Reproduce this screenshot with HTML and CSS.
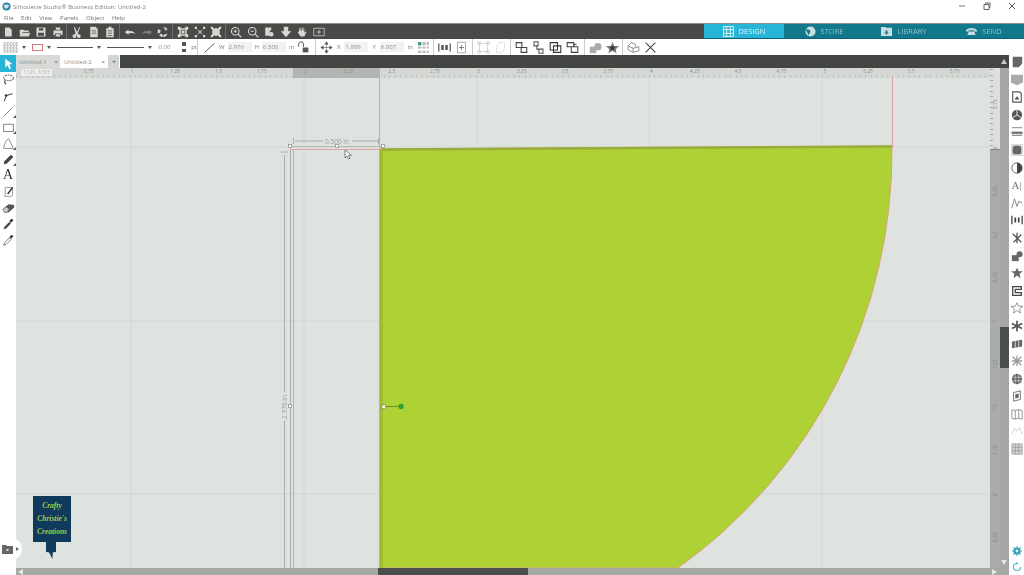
FILE: index.html
```html
<!DOCTYPE html>
<html lang="en">

<head>
    <meta charset="UTF-8">
    <title>Silhouette Studio</title>
    <link rel="stylesheet" href="styles.css">
</head>

<body>
    <div class="titlebar">
        <svg class="app-logo" viewBox="0 0 10 10"><circle cx="5" cy="5" r="4.5" fill="#2b86a8"/><path d="M2 4c2-2 4-1 6 0-1 3-3 4-5 3z" fill="#cfe6ee"/></svg>
        <span class="app-title">Silhouette Studio® Business Edition: Untitled-2</span>
        <div class="win-btns">
            <svg viewBox="0 0 8 8"><path d="M1 4h6" stroke="#777" fill="none"/></svg>
            <svg viewBox="0 0 8 8"><path d="M1 2.500h5v5H1zM2.500 2.500V1H7v4.500H6" stroke="#666" fill="none"/></svg>
            <svg viewBox="0 0 8 8"><path d="M1 1l6 6M7 1L1 7" stroke="#555" fill="none"/></svg>
        </div>
    </div>

    <div class="menubar">
        <span>File</span><span>Edit</span><span>View</span><span>Panels</span><span>Object</span><span>Help</span>
    </div>

    <div class="topbar">
        <div class="dark-tools">
            <div class="dark-group first">
                <svg viewBox="0 0 16 16"><path d="M4 2h6l3 3v9H4z"/></svg>
                <svg viewBox="0 0 16 16"><path d="M1 5h5l1 1h6v2H5l-2 6H1zM5 9h10l-2 5H3z"/></svg>
                <svg viewBox="0 0 16 16"><path d="M2 2h12v12H2zM5 3v3h6V3zM4 9v4h8V9z" fill-rule="evenodd"/></svg>
                <svg viewBox="0 0 16 16"><path d="M5 2h6v3H5zM2 6h12v6h-2v-2H4v2H2zM5 11h6v3H5z"/></svg>
            </div>
            <div class="dark-group">
                <svg viewBox="0 0 16 16"><path d="M5 1l3 7 3-7 1 1-3 8 1 1a2.500 2.500 0 1 1-2 2L8 11l-1 2a2.500 2.500 0 1 1-2-2l1-1-2-8z"/></svg>
                <svg viewBox="0 0 16 16"><path d="M3 1h7l3 3v11H3zM5 6v1h6V6zM5 9v1h6V9z" fill-rule="evenodd"/></svg>
                <svg viewBox="0 0 16 16"><path d="M3 3h3V1h4v2h3v12H3zM5 6v1h6V6zM5 9v1h6V9zM5 12v1h6v-1z" fill-rule="evenodd"/></svg>
            </div>
            <div class="dark-group">
                <svg viewBox="0 0 16 16"><path d="M1 8l5-3v2c4-1 7 0 9 4-3-2-5-2-9-1v2z"/></svg>
                <svg class="dim" viewBox="0 0 16 16"><path d="M15 8l-5-3v2C6 6 3 7 1 11c3-2 5-2 9-1v2z"/></svg>
                <svg viewBox="0 0 16 16"><path d="M8 1a7 7 0 0 1 6 4l-3 1-1-3zM14 10a7 7 0 0 1-5 5l-1-3 3-1zM2 4l3 2-1 3-3 1a7 7 0 0 1 1-6zM3 12l3-2 2 3-1 2a7 7 0 0 1-4-3z"/></svg>
            </div>
            <div class="dark-group">
                <svg viewBox="0 0 16 16"><path d="M1 1h4v2h6V1h4v4h-2v6h2v4h-4v-2H5v2H1v-4h2V5H1zM5 5v6h6V5z" fill-rule="evenodd"/><path d="M6 6h4v4H6z"/></svg>
                <svg viewBox="0 0 16 16"><path d="M1 1h3v3H1zM12 1h3v3h-3zM1 12h3v3H1zM12 12h3v3h-3z"/><path d="M5 5l6 6M11 5l-6 6" stroke="#d6d8d4" stroke-width="1.300"/></svg>
                <svg viewBox="0 0 16 16"><path d="M1 1h3v2h8V1h3v3h-2v8h2v3h-3v-2H4v2H1v-3h2V4H1z"/></svg>
            </div>
            <div class="dark-group last">
                <svg viewBox="0 0 16 16"><circle cx="7" cy="7" r="5" fill="none" stroke="#d6d8d4" stroke-width="1.500"/><path d="M10.500 10.500L15 15M5 7h4M7 5v4" stroke="#d6d8d4" stroke-width="1.500"/></svg>
                <svg viewBox="0 0 16 16"><circle cx="7" cy="7" r="5" fill="none" stroke="#d6d8d4" stroke-width="1.500"/><path d="M10.500 10.500L15 15M5 7h4" stroke="#d6d8d4" stroke-width="1.500"/></svg>
                <svg viewBox="0 0 16 16"><path d="M3 2h8v4H9v7H3z"/><circle cx="11" cy="11" r="3"/></svg>
                <svg viewBox="0 0 16 16"><path d="M5 1h6v6h4l-7 8-7-8h4z"/></svg>
                <svg viewBox="0 0 16 16"><path d="M4 6V3h1v3h1V2h1v4h1V2h1v4h1V3h1v6l2-2 1 1-3 6H6L2 8l1-1 1 1z"/></svg>
                <svg viewBox="0 0 16 16"><path d="M1 3h14v10H1zM8 5v6M5 8h6" fill="none" stroke="#d6d8d4"/></svg>
            </div>
        </div>
        <div class="nav">
            <div class="nav-item active">
                <svg viewBox="0 0 12 12"><path d="M.5.500h11v11H.500zM4 .500v11M8 .500v11M.500 4h11M.500 8h11" fill="none" stroke="#e6f6fb"/></svg>
                <span>DESIGN</span>
            </div>
            <div class="nav-item">
                <svg viewBox="0 0 12 12"><circle cx="6" cy="6" r="5.500" fill="#c9dde2"/><path d="M1 4c2-1 4 0 5 2l-2 4z" fill="#12788c"/></svg>
                <span>STORE</span>
            </div>
            <div class="nav-item">
                <svg viewBox="0 0 12 12"><path d="M0 1h5l1 1h6v9H0z" fill="#c9dde2"/><path d="M5 5h2v2h1.500L6 9.500 3.500 7H5z" fill="#12788c"/></svg>
                <span>LIBRARY</span>
            </div>
            <div class="nav-item">
                <svg viewBox="0 0 16 12"><path d="M0 4c4-4 12-4 16 0v2h-4V4H4v2H0zM4 6h8l2 5H2z" fill="#c9dde2"/></svg>
                <span>SEND</span>
            </div>
        </div>
    </div>

    <div class="optionsbar">
        <div class="opt-group fill-group">
            <span class="swatch"></span>
            <span class="caret"></span>
            <span class="stroke-box"></span>
            <span class="caret"></span>
            <span class="line-pick"></span>
            <span class="caret"></span>
            <span class="line-pick"></span>
            <span class="caret"></span>
            <span class="field w-num">0.00</span>
            <span class="spin"></span>
            <span class="unit">pt</span>
        </div>
        <div class="opt-group size-group">
            <svg class="opt-icon" viewBox="0 0 16 16"><path d="M2 14L14 3" stroke="#555" stroke-width="1.200"/></svg>
            <span class="unit">W</span><span class="field">2.976</span>
            <span class="unit">H</span><span class="field">0.500</span>
            <span class="unit">in</span>
            <svg class="opt-icon" viewBox="0 0 16 16"><path d="M2 7V4a3 3 0 0 1 6 0v3" fill="none" stroke="#555" stroke-width="1.200"/><path d="M7 8h7v6H7z" fill="#555"/></svg>
        </div>
        <div class="opt-group pos-group">
            <svg class="opt-icon" viewBox="0 0 16 16"><path d="M8 1v14M1 8h14M8 1L6 4h4zM8 15l-2-3h4zM1 8l3-2v4zM15 8l-3-2v4z" fill="#555" stroke="#555" stroke-width=".7"/></svg>
            <span class="unit">X</span><span class="field">1.959</span>
            <span class="unit">Y</span><span class="field">6.007</span>
            <span class="unit">in</span>
            <svg class="opt-icon" viewBox="0 0 12 12"><path d="M1 1h3v3H1z" fill="#2a9d80"/><path d="M5 1h3v3H5zM9 1h2v3H9zM1 5h3v2H1zM5 5h3v2H5zM9 5h2v2H9zM1 9h3v2H1zM5 9h3v2H5zM9 9h2v2H9z" fill="#b9bcb9"/></svg>
        </div>
        <div class="opt-group w39">
            <svg class="opt-icon" viewBox="0 0 16 16"><path d="M1 3v10M15 3v10" stroke="#555" stroke-width="1.500"/><path d="M4 5h3v6H4zM9 5h3v6H9z" fill="#555"/></svg>
            <svg class="opt-icon" viewBox="0 0 16 16"><path d="M3 1.500h10v13H3z" fill="none" stroke="#999"/><path d="M8 5v6M5 8h6" stroke="#666"/></svg>
        </div>
        <div class="opt-group w38">
            <svg class="opt-icon" viewBox="0 0 16 16"><path d="M3 3h10v10H3zM1 1h3v3H1zM12 1h3v3h-3zM1 12h3v3H1zM12 12h3v3h-3z" fill="none" stroke="#c8cac8"/></svg>
            <svg class="opt-icon" viewBox="0 0 16 16"><path d="M6 2h7v7l-3 5H3V7z" fill="none" stroke="#c8cac8" stroke-dasharray="2 1"/></svg>
        </div>
        <div class="opt-group w74">
            <svg class="opt-icon" viewBox="0 0 16 16"><path d="M1.500 2h7v6h-7zM7.500 8h7v6h-7z" fill="none" stroke="#444" stroke-width="1.300"/></svg>
            <svg class="opt-icon" viewBox="0 0 16 16"><path d="M2.500 1h5v5h-5zM8.500 10h5v5h-5zM6 6v4h3" fill="none" stroke="#555" stroke-width="1.300"/></svg>
            <svg class="opt-icon" viewBox="0 0 16 16"><path d="M1.500 2h9v9h-9zM5.500 6h9v8h-9z" fill="none" stroke="#333" stroke-width="1.300"/></svg>
            <svg class="opt-icon" viewBox="0 0 16 16"><path d="M1.500 2h8v5h-8zM6.500 7h8v7h-8zM10 7V4h3" fill="none" stroke="#444" stroke-width="1.300"/></svg>
        </div>
        <div class="opt-group w38">
            <svg class="opt-icon" viewBox="0 0 16 16"><path d="M1 7h8v8H1z" fill="#a9acaa"/><circle cx="11" cy="7" r="4.500" fill="#a9acaa"/></svg>
            <svg class="opt-icon" viewBox="0 0 16 16"><path d="M8 1l2 5h6l-4 4 1 5-5-3-5 3 1-5-4-4h6z" fill="#7b7e7c"/><path d="M8 5l1 2h3l-2 2 .5 3L8 10.500 5.500 12 6 9 4 7h3z" fill="#333"/></svg>
        </div>
        <div class="opt-group last">
            <svg class="opt-icon" viewBox="0 0 16 16"><path d="M1.500 6l4-4 5 2v3M1.500 6v5l6 3v-5zM7.500 9l7-2v5l-7 2" fill="none" stroke="#777"/></svg>
            <svg class="opt-icon" viewBox="0 0 16 16"><path d="M2 2l12 12M14 2L2 14" stroke="#444" stroke-width="1.300"/></svg>
        </div>
    </div>

    <div class="main">
        <div class="left-tools">
            <div class="tool active"><svg viewBox="0 0 16 16"><path d="M4 2l9 7H9l2 5-2 1-2-5-3 3z" fill="#fff"/></svg></div>
            <div class="tool"><svg viewBox="0 0 16 16"><ellipse cx="8" cy="6" rx="6" ry="3.500" fill="none" stroke="#666" stroke-width="1.300" stroke-dasharray="2.500 1"/><path d="M4 9c-2 2 0 4 1 5" fill="none" stroke="#444" stroke-width="1.300"/></svg></div>
            <div class="tool"><svg viewBox="0 0 16 16"><path d="M3 15c1-6 3-8 10-9" fill="none" stroke="#333" stroke-width="1.200"/><circle cx="5" cy="8" r="1.500" fill="#333"/></svg></div>
            <div class="tool corner"><svg viewBox="0 0 16 16"><path d="M2 14L13 3" stroke="#666"/></svg></div>
            <div class="tool corner"><svg viewBox="0 0 16 16"><path d="M2 4h12v9H2z" fill="none" stroke="#666"/></svg></div>
            <div class="tool corner"><svg viewBox="0 0 16 16"><path d="M2 14C3 8 5 4 8 2l6 12z" fill="none" stroke="#777"/></svg></div>
            <div class="tool corner"><svg viewBox="0 0 16 16"><path d="M2 14l1-4 8-8 3 3-8 8z" fill="#444"/></svg></div>
            <div class="tool letter">A</div>
            <div class="tool"><svg viewBox="0 0 16 16"><path d="M4 3h9v8c0 2-1 3-3 3H3c1-1 1-2 1-3z" fill="none" stroke="#888"/><path d="M7 11l6-8" stroke="#333" stroke-width="1.800"/></svg></div>
            <div class="tool"><svg viewBox="0 0 16 16"><path d="M1 10l7-6 7 1v3l-7 6H3z" fill="#555"/><path d="M1 10l4-3 4 3-3 4H3z" fill="#ccc" stroke="#444" stroke-width=".6"/></svg></div>
            <div class="tool"><svg viewBox="0 0 16 16"><path d="M2 15l1-3 6-6 2 2-6 6z" fill="#444"/><path d="M9 5l3-3 2 2-3 3z" fill="#222"/></svg></div>
            <div class="tool"><svg viewBox="0 0 16 16"><path d="M2 15l1-3 6-6 2 2-6 6z" fill="none" stroke="#666"/><path d="M9 5l3-3 2 2-3 3z" fill="#333"/></svg></div>
        </div>

        <div class="work">
            <div class="tabs">
                <div class="tab">Untitled-1<b>×</b></div>
                <div class="tab current">Untitled-2<b>×</b></div>
                <div class="tab plus">+</div>
                <div class="tabs-fill"></div>
                <span class="scroll-up"></span>
            </div>
            <div class="stage">
                <div class="canvas-col">
                    <div class="hruler">
                        <span class="coords">1.125 , 6.505</span>
                        <span>0.75</span><span>1</span><span>1.25</span><span>1.5</span><span>1.75</span><span>2</span><span>2.25</span><span>2.5</span><span>2.75</span><span>3</span><span>3.25</span><span>3.5</span><span>3.75</span><span>4</span><span>4.25</span><span>4.5</span><span>4.75</span><span>5</span><span>5.25</span><span>5.5</span><span>5.75</span>
                    </div>
                    <div class="canvas">
                        <svg class="drawing" viewBox="16 78 974 490">
                            <path d="M131 78v490M304 78v490M477 78v490M649 78v490M822 78v490M16 147h974M16 321h974M16 494h974" stroke="#d3d7d4" stroke-width="1" fill="none"/>
                            <path d="M379.500 78v492M892.500 78v70M293.500 149v419" stroke="#e3a0a6" stroke-width="1.100" fill="none"/>
                            <path d="M380 149L892 146A512 512 0 0 1 678 568H380z" fill="#aed136" stroke="#dd9f7c"/>
                            <path d="M381 149.500L892 146.500" stroke="#99ad3a" stroke-width="2.500"/>
                            <path d="M381.500 150v418" stroke="#9bbd30" stroke-width="3"/>
                            <path d="M290 149.500h90" stroke="#e3a0a6" stroke-width="1.200"/>
                            <path d="M295 141h28M352 141h27M293.500 138v6M378.500 138v6" stroke="#a9adaa" fill="none"/>
                            <path d="M292 146.500h91" stroke="#b3b7b4" fill="none"/>
                            <text class="dim-label" x="337" y="143.500" text-anchor="middle">0.500 in</text>
                            <path d="M284.500 155v237M284.500 421v147M290.500 149v419M281 152h7" stroke="#a9adaa" fill="none"/>
                            <text class="dim-label" transform="translate(286.500 407) rotate(-90)" text-anchor="middle">2.976 in</text>
                            <rect x="288.500" y="144.500" width="3" height="3" fill="#fff" stroke="#888" stroke-width=".7"/>
                            <rect x="335.500" y="144.500" width="3" height="3" fill="#fff" stroke="#888" stroke-width=".7"/>
                            <rect x="381.500" y="144.500" width="3" height="3" fill="#fff" stroke="#888" stroke-width=".7"/>
                            <rect x="288.500" y="404.500" width="3" height="3" fill="#fff" stroke="#888" stroke-width=".7"/>
                            <path d="M386 406.500h12" stroke="#6c8f2e"/>
                            <rect x="382" y="405" width="3.500" height="3.500" fill="#fff" stroke="#777" stroke-width=".6"/>
                            <circle cx="401" cy="406.500" r="2.300" fill="#27a83a" stroke="#1c7d2a" stroke-width=".6"/>
                            <path d="M345 150v8l2-2 1.500 3 1.500-.7-1.500-3h3z" fill="#fff" stroke="#555" stroke-width=".7"/>
                        </svg>
                        <div class="logo-card">
                            <span>Crafty</span><span>Christie's</span><span>Creations</span>
                        </div>
                        <div class="logo-tail"></div>
                    </div>
                </div>
                <div class="vruler">
                    <span>5.75</span><span>6</span><span>6.25</span><span>6.5</span><span>6.75</span><span>7</span><span>7.25</span><span>7.5</span><span>7.75</span><span>8</span><span>8.25</span>
                </div>
                <div class="vscroll">
                    <div class="vthumb"></div>
                    <span class="scroll-down"></span>
                </div>
            </div>
            <div class="hscroll">
                <span class="scroll-left"></span>
                <div class="hthumb"></div>
                <span class="scroll-right"></span>
            </div>
        </div>

        <div class="right-tools">
            <svg viewBox="0 0 14 14"><path d="M2 1h11v8l-4 4H2z" fill="#666"/></svg>
            <svg viewBox="0 0 14 14"><path d="M0 1h14v9l-7 3-7-3z" fill="#a9acaa"/></svg>
            <svg viewBox="0 0 14 14"><path d="M2 1h8l2 2v10H2z" fill="none" stroke="#555" stroke-width="1.300"/><path d="M4 10l3-4 3 4z" fill="#555"/></svg>
            <svg viewBox="0 0 14 14"><circle cx="7" cy="7" r="6" fill="#555"/><path d="M7 7V1M7 7l5 3M7 7l-5 3" stroke="#fff"/></svg>
            <svg viewBox="0 0 14 14"><path d="M1 2h12M1 7h12v2H1zM1 11h12" stroke="#777" fill="#777"/></svg>
            <svg class="boxed" viewBox="0 0 14 14"><rect x="2" y="2" width="10" height="10" rx="3" fill="#666"/></svg>
            <svg viewBox="0 0 14 14"><circle cx="7" cy="7" r="6" fill="none" stroke="#555"/><path d="M7 1a6 6 0 0 1 0 12z" fill="#444"/></svg>
            <span class="panel-text">A|</span>
            <svg viewBox="0 0 14 14"><path d="M1 13L4 2l3 9 2-6 4 2" fill="none" stroke="#777"/></svg>
            <svg viewBox="0 0 14 14"><path d="M1 2v10M13 2v10" stroke="#444" stroke-width="1.500"/><path d="M4 4h2v6H4zM8 4h2v6H8z" fill="#444"/></svg>
            <svg viewBox="0 0 14 14"><path d="M2 2l10 10M12 3L3 12M7 1v12" stroke="#555" stroke-width="1.500"/></svg>
            <svg viewBox="0 0 14 14"><path d="M1 6h8v7H1z" fill="#666"/><circle cx="10" cy="5" r="3.500" fill="#666"/></svg>
            <svg viewBox="0 0 14 14"><path d="M7 1l2 4h5l-4 3 1 5-4-3-4 3 1-5-4-3h5z" fill="#666"/></svg>
            <svg viewBox="0 0 14 14"><path d="M2 2h10v3H5v4h7v3H2z" fill="none" stroke="#444" stroke-width="1.500"/></svg>
            <svg viewBox="0 0 14 14"><path d="M7 1l2 4h5l-4 3 1 5-4-3-4 3 1-5-4-3h5z" fill="none" stroke="#888"/></svg>
            <svg viewBox="0 0 14 14"><path d="M7 1v12M1 4l12 6M13 4L1 10" stroke="#555" stroke-width="2"/></svg>
            <svg viewBox="0 0 14 14"><path d="M1 4l12-2v8L1 12z" fill="#666"/><path d="M5 3.500v8M9 3v8" stroke="#ddd"/></svg>
            <svg viewBox="0 0 14 14"><path d="M2 2l10 10M12 2L2 12M7 1v12M1 7h12" stroke="#999" stroke-width="1.500"/></svg>
            <svg viewBox="0 0 14 14"><circle cx="7" cy="7" r="6" fill="#666"/><path d="M1 5h12M1 9h12M5 1v12M9 1v12" stroke="#ddd" stroke-width=".7"/></svg>
            <svg viewBox="0 0 14 14"><path d="M3 3l8-2v10l-8 2z" fill="none" stroke="#666"/><path d="M5 5l4-1v5l-4 1z" fill="#666"/></svg>
            <svg viewBox="0 0 14 14"><path d="M1 2l4 1 4-1 4 1v10l-4-1-4 1-4-1zM5 3v10M9 2v10" fill="none" stroke="#888"/></svg>
            <svg viewBox="0 0 14 14"><path d="M1 11L4 4l3 3 3-4 3 8" fill="none" stroke="#aaa" stroke-dasharray="1.500 1"/></svg>
            <svg viewBox="0 0 14 14"><path d="M1 1h12v12H1zM1 5h12M1 9h12M5 1v12M9 1v12" fill="#d2d4d2" stroke="#888" stroke-width=".7"/></svg>
            <div class="right-fill"></div>
            <svg class="teal" viewBox="0 0 14 14"><circle cx="7" cy="7" r="3.500" fill="none" stroke="#2d9cb8" stroke-width="3"/><path d="M7 0v2M7 12v2M0 7h2M12 7h2M2 2l1.500 1.500M10.500 10.500L12 12M12 2l-1.500 1.500M3.500 10.500L2 12" stroke="#2d9cb8" stroke-width="1.500"/></svg>
            <svg class="teal" viewBox="0 0 14 14"><path d="M12 7a5 5 0 1 1-5-5" fill="none" stroke="#5aaec4" stroke-width="1.500"/><path d="M6 0l3 2-3 2z" fill="#5aaec4"/></svg>
        </div>

        <div class="folder-tab">
            <svg viewBox="0 0 12 10"><path d="M0 1h4l1 1h6v8H0z" fill="#666"/><path d="M4.500 5h2v2h-2z" fill="#ddd"/></svg>
            <span class="tiny-caret"></span>
        </div>
    </div>
</body>

</html>
```

FILE: styles.css
```css
* {
    box-sizing: border-box;
}

html,
body {
    margin: 0;
    padding: 0;
    height: 575px;
    overflow: hidden;
}

body {
    display: flex;
    flex-direction: column;
    width: 1024px;
    background: #fff;
    font-family: "Open Sans", "Liberation Sans", sans-serif;
    filter: blur(0.45px);
}

/* title + menu */
.titlebar {
    display: flex;
    align-items: center;
    height: 12px;
    padding-left: 2px;
    color: #7d7f7d;
    font-size: 6.1px;
}

.app-logo {
    width: 9px;
    height: 9px;
    margin-right: 2px;
}

.win-btns {
    display: flex;
    margin-left: auto;
    gap: 17px;
    padding-right: 8px;
}

.win-btns svg {
    width: 8px;
    height: 8px;
}

.menubar {
    display: flex;
    align-items: center;
    gap: 7.6px;
    height: 11px;
    padding-left: 4px;
    color: #6e706e;
    font-size: 6px;
}

/* dark toolbar */
.topbar {
    display: flex;
    height: 16px;
    background: #474a46;
    border-top: 1px solid #8c8e8b;
}

.dark-tools {
    display: flex;
    width: 705px;
}

.dark-group {
    display: flex;
    align-items: center;
    gap: 4.5px;
    width: 53px;
    padding-left: 4px;
    border-right: 1px solid #6c6f6b;
}

.dark-group.first {
    width: 67px;
    padding-left: 2px;
}

.dark-group.last {
    width: auto;
    border-right: none;
}

.dark-group svg {
    width: 12px;
    height: 12px;
    fill: #d6d8d4;
}

.dark-group svg.dim {
    fill: #7d807c;
}

.nav {
    display: flex;
    flex: 1;
    background: #12788c;
    border-bottom: 1px solid #0f6272;
}

.nav-item {
    display: flex;
    align-items: center;
    justify-content: center;
    gap: 5px;
    width: 80px;
    color: #8fc0cb;
    font-size: 7.5px;
}

.nav-item.active {
    background: #27b4d6;
    color: #e6f6fb;
}

.nav-item svg {
    width: 11px;
    height: 11px;
}

/* options row */
.optionsbar {
    display: flex;
    height: 16px;
    color: #777;
    font-size: 6px;
}

.opt-group {
    display: flex;
    align-items: center;
    gap: 4px;
    padding-left: 4px;
    border-right: 1px solid #c9cbc9;
}

.opt-group.last {
    border-right: none;
}

.fill-group {
    width: 198px;
    padding-left: 3px;
    gap: 0;
}

.size-group {
    width: 118px;
    padding-left: 5px;
    gap: 3px;
}

.pos-group {
    width: 118px;
}

.w39 {
    width: 39px;
}

.w38 {
    width: 38px;
}

.w74 {
    width: 74px;
}

.swatch {
    width: 15px;
    height: 11px;
    background: repeating-conic-gradient(#c8cac8 0 25%, #eceeec 0 50%) 0 0 / 3px 3px;
}

.caret {
    width: 0;
    height: 0;
    margin: 0 6px 0 4px;
    border-left: 2px solid transparent;
    border-right: 2px solid transparent;
    border-top: 3px solid #555;
}

.stroke-box {
    width: 11px;
    height: 7px;
    border: 1px solid #cf7f80;
    background: #fff;
}

.line-pick {
    width: 37px;
    height: 1px;
    background: #555;
}

.field {
    width: 24px;
    padding-left: 1px;
    background: #f1f2f1;
    line-height: 10px;
    color: #8a8c8a;
}

.w-num {
    width: 20px;
    margin-right: 5px;
    background: #fff;
}

.spin {
    width: 4px;
    height: 10px;
    margin-right: 5px;
    background: linear-gradient(#555 0 35%, transparent 35% 65%, #555 65%);
}

.opt-icon {
    width: 13px;
    height: 13px;
    flex: none;
}

/* left tools */
.main {
    position: relative;
    display: flex;
    flex: 1;
    min-height: 0;
}

.left-tools {
    display: flex;
    flex-direction: column;
    width: 16px;
    flex: none;
}

.tool {
    position: relative;
    display: flex;
    align-items: center;
    justify-content: center;
    height: 16px;
}

.tool svg {
    width: 13px;
    height: 13px;
}

.tool.active {
    height: 17px;
    margin-bottom: -1px;
    background: #27b4d6;
}

.tool.corner::after {
    content: "";
    position: absolute;
    right: 0;
    bottom: 1px;
    border-left: 3px solid transparent;
    border-bottom: 3px solid #555;
}

.letter {
    color: #333;
    font-family: "Liberation Serif", serif;
    font-size: 14px;
}

/* tabs + stage */
.work {
    display: flex;
    flex-direction: column;
    flex: 1;
    min-width: 0;
}

.tabs {
    display: flex;
    flex: none;
    height: 13px;
    background: #424542;
    font-size: 6px;
    color: #8b8d8b;
}

.tab {
    display: flex;
    align-items: center;
    justify-content: space-between;
    width: 45px;
    padding: 0 2px 0 3px;
    background: #d8dad8;
    border-right: 1px solid #fff;
}

.tab.current {
    width: 47px;
    background: #fff;
}

.tab.plus {
    width: 12px;
    justify-content: center;
    background: #d3d5d3;
    color: #444;
}

.tab b {
    font-weight: normal;
    color: #555;
}

.tabs-fill {
    flex: 1;
}

.scroll-up {
    align-self: center;
    margin-right: 2px;
    border-left: 3px solid transparent;
    border-right: 3px solid transparent;
    border-bottom: 5px solid #c9cbc9;
}

.stage {
    display: flex;
    flex: 1;
    min-height: 0;
}

.canvas-col {
    display: flex;
    flex-direction: column;
    flex: 1;
    min-width: 0;
}

.hruler {
    position: relative;
    display: flex;
    flex: none;
    height: 10px;
    padding-left: 51px;
    color: #8d8f8d;
    font-size: 5px;
    line-height: 7px;
    background:
        linear-gradient(90deg, transparent 277px, #b3b5b2 277px, #b3b5b2 364px, transparent 364px),
        repeating-linear-gradient(90deg, #bec1be 0 1px, transparent 1px 5.41px) 0 100% / 100% 3px no-repeat,
        #d5d8d4;
}

.hruler span {
    flex: 0 0 43.3px;
    text-align: center;
}

.hruler .coords {
    position: absolute;
    left: 5px;
    top: 1px;
    width: 31px;
    background: #eceeec;
    color: #b0b2b0;
    font-size: 4.500px;
}

.canvas {
    position: relative;
    flex: 1;
    min-height: 0;
    background: #dfe3e0;
    overflow: hidden;
}

.drawing {
    display: block;
    width: 974px;
    height: 490px;
}

.dim-label {
    fill: #9b9e9b;
    font-size: 6.5px;
    font-family: "Open Sans", sans-serif;
}

/* logo stuck in the corner */
.logo-card {
    position: absolute;
    left: 17px;
    top: 418px;
    display: flex;
    flex-direction: column;
    align-items: center;
    width: 38px;
    height: 46px;
    padding-top: 3px;
    background: #0f3a5c;
    color: #a4c84a;
    font-family: "Liberation Serif", serif;
    font-style: italic;
    font-weight: bold;
    font-size: 7.5px;
    line-height: 13px;
}

.logo-tail {
    position: absolute;
    left: 29.5px;
    top: 464px;
    width: 10.5px;
    height: 17px;
    background: #0f3a5c;
    clip-path: polygon(0 0, 100% 0, 100% 58%, 70% 62%, 65% 100%, 35% 62%, 0 58%);
}

.folder-tab {
    position: absolute;
    left: 0;
    top: 483px;
    display: flex;
    align-items: center;
    gap: 2px;
    width: 22px;
    height: 22px;
    padding-left: 2px;
    background: #fff;
    border-radius: 0 11px 11px 0;
}

.folder-tab svg {
    width: 12px;
    height: 10px;
}

.tiny-caret {
    border-top: 2px solid transparent;
    border-bottom: 2px solid transparent;
    border-left: 3px solid #666;
}

/* rulers + scrollbars */
.vruler {
    display: flex;
    flex: none;
    flex-direction: column;
    width: 10px;
    padding-top: 15px;
    color: #858785;
    font-size: 5px;
    background:
        repeating-linear-gradient(0deg, #a5a8a5 0 1px, transparent 1px 5.41px) 0 0 / 3px 100% no-repeat,
        linear-gradient(#dcdfdc 0 81px, #5f625f 81px, #a9aca9 82px);
}

.vruler span {
    flex: 0 0 43.3px;
    display: flex;
    align-items: center;
    justify-content: center;
    writing-mode: vertical-rl;
    transform: rotate(180deg);
}

.vscroll {
    position: relative;
    flex: none;
    width: 9px;
    background: #a4a7a4;
}

.vthumb {
    position: absolute;
    top: 259px;
    left: 0;
    width: 9px;
    height: 41px;
    background: #4a4e4d;
}

.scroll-down {
    position: absolute;
    bottom: 3px;
    left: 1px;
    border-left: 3.500px solid transparent;
    border-right: 3.500px solid transparent;
    border-top: 5px solid #e5e6e5;
}

.hscroll {
    display: flex;
    flex: none;
    align-items: center;
    height: 7px;
    background: #a4a7a4;
}

.scroll-left {
    margin-left: 2px;
    border-top: 3px solid transparent;
    border-bottom: 3px solid transparent;
    border-right: 5px solid #e5e6e5;
}

.hthumb {
    width: 150px;
    height: 7px;
    margin-left: 355px;
    background: #4a4e4d;
}

.scroll-right {
    margin-left: 464px;
    border-top: 3px solid transparent;
    border-bottom: 3px solid transparent;
    border-left: 5px solid #e5e6e5;
}

/* right panel */
.right-tools {
    display: flex;
    flex: none;
    flex-direction: column;
    align-items: center;
    width: 15px;
    padding: 1px 0 3px;
    gap: 5.600px;
    background: #fff;
}

.right-tools svg {
    flex: none;
    width: 12px;
    height: 12px;
}

.right-tools .boxed {
    background: #d9dbd9;
}

.right-tools .teal {
    width: 10px;
    height: 10px;
}

.right-fill {
    flex: 1;
}

.panel-text {
    height: 12px;
    color: #777;
    font-family: "Liberation Serif", serif;
    font-size: 11px;
    line-height: 12px;
}
```
